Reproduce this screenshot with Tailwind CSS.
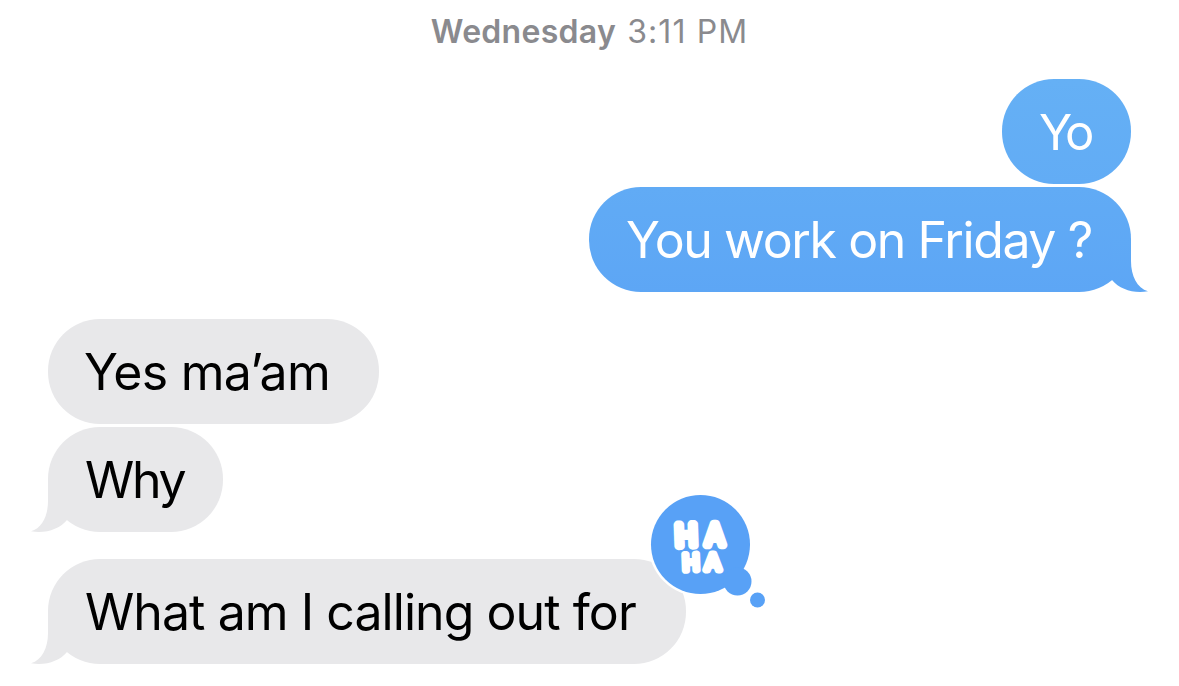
<!DOCTYPE html>
<html lang="en">

<head>
    <meta charset="UTF-8">
    <meta name="viewport" content="width=device-width, initial-scale=1.0">
    <title>Messages</title>
    <script src="https://cdn.jsdelivr.net/npm/@tailwindcss/browser@4"></script>
</head>

<body class="bg-white font-['Inter',sans-serif] h-screen overflow-hidden">

    <!-- Conversation -->
    <main class="flex flex-col pt-3 px-12">
        <p class="text-center text-[32px] leading-[40px] text-[#8a8a8e] whitespace-nowrap">
            <span class="mr-0.5 font-semibold tracking-[0.3px]">Wednesday</span>
            <span class="tracking-[1.1px]">3:11 PM</span>
        </p>

        <!-- Sent -->
        <div class="mt-[27px] flex flex-col items-end gap-[3px] text-white">
            <div class="flex h-[105px] w-[129px] items-center rounded-[52px] bg-linear-to-b from-[#65b0f5] to-[#62acf5] pt-0.5 pl-[37px]">
                <span class="text-[49px] tracking-[-3.5px] whitespace-nowrap">Yo</span>
            </div>
            <div class="relative flex h-[105px] w-[542px] items-center rounded-[52px] bg-linear-to-b from-[#61abf5] to-[#5da6f5] pt-0.5 pl-[37px]">
                <span class="text-[50px] tracking-[-1.4px] whitespace-nowrap">You work on Friday ?</span>
                <svg class="absolute -right-[17px] bottom-0" width="36" height="53" viewBox="0 0 36 53">
                    <path d="M19 0V22C19 37 25 49 36 52.3C21 54.500 8 50.500 0 41V0Z" fill="url(#sent)" />
                    <defs>
                        <linearGradient id="sent" x1="0" y1="0" x2="0" y2="1">
                            <stop stop-color="#5fa9f5" />
                            <stop offset="1" stop-color="#5da6f5" />
                        </linearGradient>
                    </defs>
                </svg>
            </div>
        </div>

        <!-- Received -->
        <div class="mt-[27px] flex flex-col items-start gap-[3px] text-black">
            <div class="flex h-[105px] w-[331px] items-center rounded-[52px] bg-[#e8e8ea] pt-0.5 pl-[36px]">
                <span class="text-[50px] tracking-[-0.75px] whitespace-nowrap">Yes ma’am</span>
            </div>
            <div class="relative flex h-[105px] w-[175px] items-center rounded-[52px] bg-[#e8e8ea] pt-0.5 pl-[37px]">
                <span class="text-[50px] tracking-[-2.3px] whitespace-nowrap">Why</span>
                <svg class="absolute -left-[17px] bottom-0" width="36" height="53" viewBox="0 0 36 53">
                    <path d="M17 0V22C17 37 11 49 0 52.3C15 54.500 28 50.500 36 41V0Z" fill="#e8e8ea" />
                </svg>
            </div>
        </div>

        <div class="relative mt-[27px] flex h-[105px] w-[638px] items-center rounded-[52px] bg-[#e8e8ea] pt-0.5 pl-[37px] text-black">
            <span class="text-[50px] tracking-[-0.94px] whitespace-nowrap">What am I calling out for</span>
            <svg class="absolute -left-[17px] bottom-0" width="36" height="53" viewBox="0 0 36 53">
                <path d="M17 0V22C17 37 11 49 0 52.3C15 54.500 28 50.500 36 41V0Z" fill="#e8e8ea" />
            </svg>

            <!-- Haha reaction -->
            <svg class="absolute left-[592px] -top-[74px]" width="140" height="130" viewBox="0 0 140 130">
                <circle cx="60.500" cy="59.500" r="52" fill="#fff" />
                <g fill="#58a1f6">
                    <circle cx="60.500" cy="59.500" r="49.500" />
                    <circle cx="97.500" cy="96.500" r="14" />
                    <circle cx="117.500" cy="115" r="7.500" />
                </g>
                <g fill="#fff" stroke="#fff" stroke-linejoin="round" font-family="Inter, sans-serif" font-weight="300">
                    <g font-size="29" stroke-width="8.500">
                        <text x="35.500" y="60.500" transform="rotate(-2 47 50)">H</text>
                        <text x="65.500" y="60" textLength="18.500" lengthAdjust="spacingAndGlyphs">A</text>
                    </g>
                    <g font-size="22" stroke-width="6.800">
                        <text x="42.800" y="85.300" transform="rotate(-2 51 77)">H</text>
                        <text x="65" y="84.800" textLength="15.500" lengthAdjust="spacingAndGlyphs">A</text>
                    </g>
                </g>
            </svg>
        </div>
    </main>

</body>

</html>
